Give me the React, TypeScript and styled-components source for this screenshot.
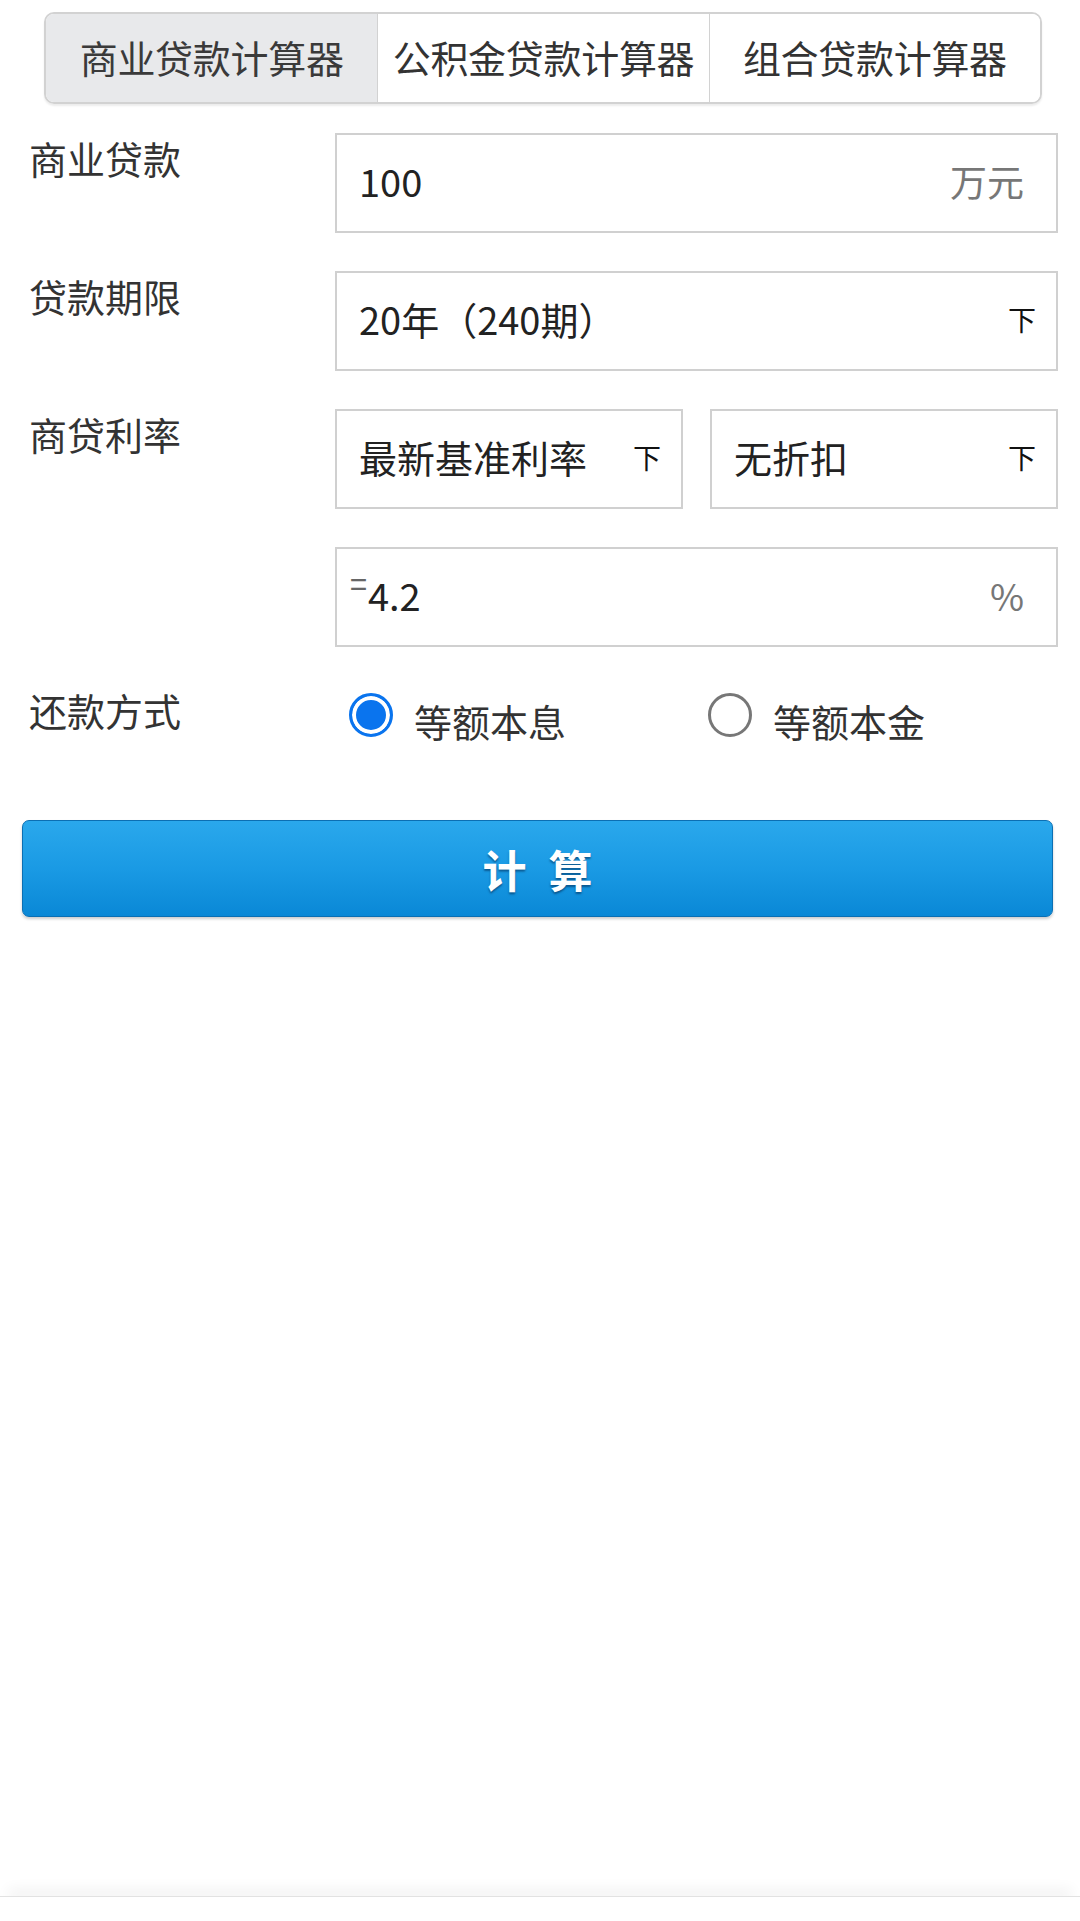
import React, { useState } from 'react'
import styled, { createGlobalStyle } from 'styled-components'

const GlobalStyle = createGlobalStyle`
    html, body {
        margin: 0;
        padding: 0;
        background: #ffffff;
    }
    body {
        font-family: "Noto Sans CJK SC", "Noto Sans", sans-serif;
        color: #333;
    }
`

const Page = styled.div`
    min-height: 1921px;
    display: flex;
    flex-direction: column;
    box-sizing: border-box;
    padding-top: 12px;
`

const Tabs = styled.div`
    display: grid;
    grid-template-columns: repeat(3, 1fr);
    margin: 0 38px 0 44px;
    height: 92px;
    border: 2px solid #d2d2d2;
    border-radius: 10px;
    overflow: hidden;
    box-shadow: 0 2px 2px rgba(0, 0, 0, 0.08);
    box-sizing: border-box;
`

const Tab = styled.div<{ $active?: boolean }>`
    display: flex;
    align-items: center;
    justify-content: center;
    padding-bottom: 4px;
    font-size: 38px;
    color: ${p => (p.$active ? '#3a3a3a' : '#333')};
    background: ${p => (p.$active ? '#e8e9eb' : '#fff')};
    border-left: ${p => (p.$active ? 'none' : '1.5px solid #d2d2d2')};
    white-space: nowrap;
    letter-spacing: -0.3px;
`

const Form = styled.div`
    display: grid;
    grid-template-columns: 306px 1fr;
    row-gap: 38px;
    padding: 29px 22px 0 29px;
`

const Label = styled.div`
    font-size: 38px;
    line-height: 50px;
    color: #333;
`

const Field = styled.div`
    display: flex;
    align-items: center;
    height: 100px;
    box-sizing: border-box;
    border: 2px solid #d0d0d0;
    padding: 0 22px 5px 22px;
    background: #fff;
`

const Value = styled.div`
    flex: 1;
    font-size: 38px;
    color: #222;
    white-space: nowrap;
`

const Unit = styled.div`
    font-size: 37px;
    color: #777;
    margin-right: 10px;
`

const Arrow = styled.div`
    font-size: 28px;
    color: #111;
    margin-right: -2px;
`

const Pair = styled.div`
    display: grid;
    grid-template-columns: 1fr 1fr;
    gap: 27px;
`

const Eq = styled.span`
    display: inline-block;
    font-size: 34px;
    line-height: 1;
    color: #666;
    transform: translateY(-14px) scaleX(0.9);
    margin-right: 0;
    margin-left: -10px;
`

const Radios = styled.div`
    display: grid;
    grid-template-columns: 359px 1fr;
    padding-left: 14px;
    padding-top: 2px;
`

const RadioOption = styled.label`
    display: flex;
    align-items: center;
    gap: 21px;
    font-size: 38px;
    color: #333;
    cursor: pointer;
`

const RadioDot = styled.span<{ $checked?: boolean }>`
    width: 44px;
    height: 44px;
    box-sizing: border-box;
    border-radius: 50%;
    border: 3px solid ${p => (p.$checked ? '#0a74ee' : '#777')};
    background: ${p => (p.$checked ? '#0a74ee' : '#fff')};
    box-shadow: ${p => (p.$checked ? 'inset 0 0 0 4px #fff' : 'none')};
    flex-shrink: 0;
    margin-top: -6px;
`

const RadioText = styled.span`
    margin-top: 6px;
`

const CalcButton = styled.button`
    display: block;
    margin: 72px 27px 0 22px;
    height: 97px;
    border: 1.5px solid #0b6fb3;
    border-radius: 7px;
    background: linear-gradient(to bottom, #2aa8ec 0%, #1a9ae4 50%, #0a88d6 100%);
    color: #fff;
    font-family: "Noto Sans CJK SC", sans-serif;
    font-size: 44px;
    font-weight: 700;
    letter-spacing: 22px;
    text-indent: 22px;
    text-shadow: 0 2px 2px rgba(0, 40, 80, 0.55);
    box-shadow: 0 2px 3px rgba(0, 0, 0, 0.2);
    cursor: pointer;
`

const Spacer = styled.div`
    flex: 1;
`

const Footer = styled.div`
    height: 24px;
    background: #fff;
    border-top: 1px solid #e2e2e2;
    box-shadow: 0 -14px 14px -8px rgba(0, 0, 0, 0.07);
`

const App = () => {
    const [method, setMethod] = useState('interest')
    return (
        <Page>
            <GlobalStyle />
            <Tabs>
                <Tab $active>商业贷款计算器</Tab>
                <Tab>公积金贷款计算器</Tab>
                <Tab>组合贷款计算器</Tab>
            </Tabs>
            <Form>
                <Label>商业贷款</Label>
                <Field>
                    <Value>100</Value>
                    <Unit>万元</Unit>
                </Field>

                <Label>贷款期限</Label>
                <Field>
                    <Value>20年（240期）</Value>
                    <Arrow>下</Arrow>
                </Field>

                <Label>商贷利率</Label>
                <Pair>
                    <Field>
                        <Value>最新基准利率</Value>
                        <Arrow>下</Arrow>
                    </Field>
                    <Field>
                        <Value>无折扣</Value>
                        <Arrow>下</Arrow>
                    </Field>
                </Pair>

                <div />
                <Field>
                    <Value>
                        <Eq>=</Eq>4.2
                    </Value>
                    <Unit>%</Unit>
                </Field>

                <Label>还款方式</Label>
                <Radios>
                    <RadioOption onClick={() => setMethod('interest')}>
                        <RadioDot $checked={method === 'interest'} />
                        <RadioText>等额本息</RadioText>
                    </RadioOption>
                    <RadioOption onClick={() => setMethod('principal')}>
                        <RadioDot $checked={method === 'principal'} />
                        <RadioText>等额本金</RadioText>
                    </RadioOption>
                </Radios>
            </Form>
            <CalcButton>计算</CalcButton>
            <Spacer />
            <Footer />
        </Page>
    )
}

export default App
